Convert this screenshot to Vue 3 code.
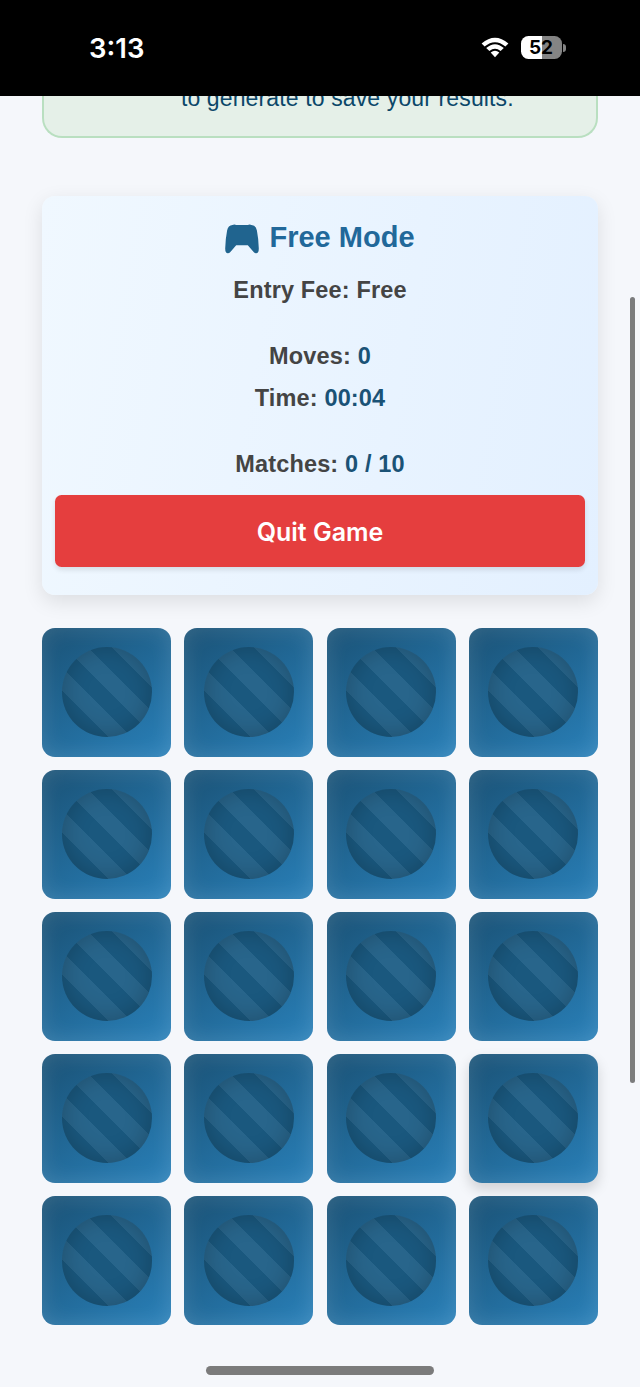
<script setup>
const stats = [
	{ label: 'Moves:', value: '0' },
	{ label: 'Time:', value: '00:04' },
	{ label: 'Matches:', value: '0 / 10', spaced: true },
]

const cards = Array.from({ length: 20 }, (_, index) => ({
	id: index + 1,
	raised: index === 15,
}))
</script>

<template>
	<div class="screen">
		<header class="status-bar">
			<span class="clock">3:13</span>
			<div class="status-icons">
				<svg class="wifi" viewBox="0 0 28 22">
					<path d="M.6 6.6Q14-5 27.4 6.6L24.4 9.5Q14 1 3.6 9.5Z" />
					<path d="M5.2 11.1Q14 3.5 22.8 11.1L19.6 14Q14 9.4 8.4 14Z" />
					<path d="M9.7 15.5Q14 11.9 18.3 15.5L14 20.2Z" />
				</svg>
				<div class="battery">
					<span class="battery-level">52</span>
					<span class="battery-tip"></span>
				</div>
			</div>
		</header>

		<main class="content">
			<section class="notice">
				<p class="notice-text">to generate to save your results.</p>
			</section>

			<section class="game-info">
				<h2 class="mode">
					<svg class="gamepad" viewBox="0 0 34 30">
						<path d="M7.5 1Q9.2-.1 11.2.9H22.8Q24.8-.1 26.5 1Q30.9 1.3 31.9 6.4Q33.6 15 33.8 24.5Q33.8 29.4 31 29.2Q29.4 29.3 28.2 27.6L22.8 21.2H11.2L5.8 27.6Q4.6 29.3 3 29.2Q.2 29.4.2 24.5Q.4 15 2.1 6.4Q3.1 1.3 7.5 1Z" />
					</svg>
					<span>Free Mode</span>
				</h2>
				<p class="fee">Entry Fee: Free</p>
				<p v-for="stat in stats" :key="stat.label" class="stat" :class="{ spaced: stat.spaced }">
					{{ stat.label }} <span class="stat-value">{{ stat.value }}</span>
				</p>
				<button class="quit" type="button">Quit Game</button>
			</section>

			<section class="board">
				<div v-for="card in cards" :key="card.id" class="card" :class="{ raised: card.raised }">
					<div class="card-pattern"></div>
				</div>
			</section>
		</main>

		<div class="scrollbar"></div>
		<div class="home-indicator"></div>
	</div>
</template>

<style>
body {
	margin: 0;
	background: #f5f7fb;
}
</style>

<style scoped>
.screen {
	position: relative;
	width: 640px;
	height: 1387px;
	overflow: hidden;
	background: #f5f7fb;
	font-family: 'Liberation Sans', Arial, sans-serif;
}

.status-bar {
	display: flex;
	align-items: center;
	justify-content: space-between;
	box-sizing: border-box;
	height: 96px;
	padding: 0 74.5px 1px 89px;
	background: #000;
	color: #fff;
}

.clock {
	font: 600 27.5px/34px Inter, sans-serif;
}

.status-icons {
	display: flex;
	align-items: center;
	gap: 12px;
}

.wifi {
	width: 28px;
	height: 22px;
	fill: #fff;
}

.battery {
	display: flex;
	align-items: center;
	gap: 1.5px;
}

.battery-level {
	width: 41px;
	height: 23px;
	border-radius: 7.5px;
	background: linear-gradient(90deg, #fff 52%, #848484 52%);
	color: #000;
	font: 700 19px/23px Inter, sans-serif;
	text-align: center;
}

.battery-tip {
	width: 2.5px;
	height: 8px;
	border-radius: 0 3px 3px 0;
	background: #848484;
}

.content {
	padding: 0 42.4px;
}

.notice {
	display: flex;
	align-items: flex-end;
	box-sizing: border-box;
	height: 41.6px;
	overflow: hidden;
	border: 2px solid #b9dfc0;
	border-top: 0;
	border-radius: 0 0 20px 20px;
	background: #e5f0e8;
}

.notice-text {
	margin: 0 0 21px 136.5px;
	color: #0b4769;
	font-size: 23px;
	letter-spacing: 0.13px;
	line-height: 34px;
	white-space: nowrap;
}

.game-info {
	box-sizing: border-box;
	height: 399px;
	margin-top: 58.4px;
	padding: 24px 13px 0;
	border-radius: 13px;
	background: linear-gradient(100deg, #f0f8ff, #e3f0ff);
	box-shadow: 0 6.5px 20px rgba(0, 0, 0, 0.1);
	text-align: center;
}

.mode {
	display: flex;
	justify-content: center;
	gap: 10px;
	height: 34px;
	margin: 0;
	color: #21689a;
	font-size: 29px;
	line-height: 34px;
}

.gamepad {
	width: 34px;
	height: 30px;
	margin-top: 4.5px;
	fill: #20648f;
}

.fee,
.stat {
	margin: 0;
	color: #444;
	font-size: 23.5px;
	font-weight: 700;
	letter-spacing: 0.15px;
	line-height: 42px;
}

.fee {
	margin: 15px 0 24px;
}

.stat.spaced {
	margin-top: 24px;
}

.stat-value {
	color: #1a5276;
}

.quit {
	display: block;
	width: 100%;
	height: 72px;
	margin-top: 10px;
	padding: 2px 0 0;
	border: 0;
	border-radius: 6.5px;
	background: #e53e3e;
	box-shadow: 0 3px 5px rgba(0, 0, 0, 0.1);
	color: #fff;
	font: 600 25px/70px Inter, sans-serif;
}

.board {
	display: grid;
	grid-template-columns: repeat(4, 1fr);
	gap: 13.1px;
	margin-top: 32.6px;
}

.card {
	display: grid;
	place-items: center;
	aspect-ratio: 1;
	border-radius: 13px;
	background: linear-gradient(145deg, #1a5276, #2980b9);
	box-shadow: inset 0 0 22px rgba(255, 255, 255, 0.14);
}

.card.raised {
	box-shadow: inset 0 0 22px rgba(255, 255, 255, 0.14), 0 6.5px 13px rgba(0, 0, 0, 0.15);
}

.card-pattern {
	width: 70%;
	height: 70%;
	border-radius: 50%;
	background: repeating-linear-gradient(45deg, #28658b 0 16.4px, #1a587e 16.4px 32.8px);
	box-shadow: inset 0 0 24px rgba(0, 0, 0, 0.22);
}

.scrollbar {
	position: absolute;
	top: 297px;
	right: 5px;
	width: 5px;
	height: 786px;
	border-radius: 3px;
	background: #7b7c7d;
}

.home-indicator {
	position: absolute;
	bottom: 12.5px;
	left: 206px;
	width: 228px;
	height: 8.5px;
	border-radius: 5px;
	background: #7b7b7b;
}
</style>
